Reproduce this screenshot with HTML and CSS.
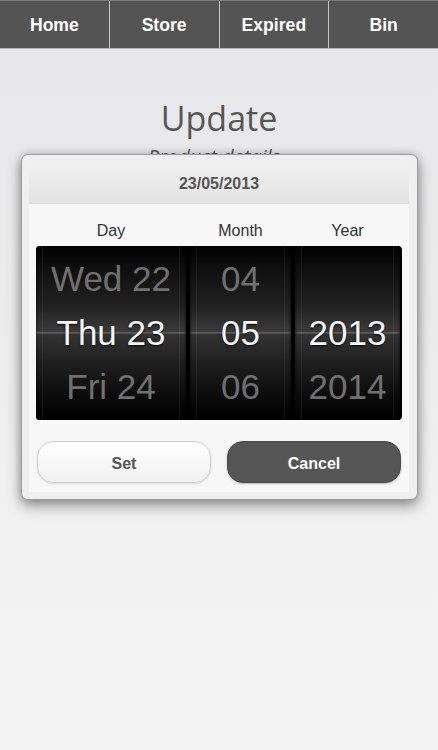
FILE: index.html
```html
<!DOCTYPE html>
<html>
<head>
<meta charset="utf-8">
<link rel="stylesheet" href="styles.css">
</head>
<body>
<nav class="nav">
  <div class="nav-item">Home</div>
  <div class="nav-item">Store</div>
  <div class="nav-item">Expired</div>
  <div class="nav-item last">Bin</div>
</nav>
<main class="main">
  <h1 class="title">Update</h1>
  <p class="subtitle">Product details</p>
</main>
<div class="modal">
  <div class="modal-inner">
    <div class="modal-head">23/05/2013</div>
    <div class="labels">
      <div class="label">Day</div>
      <div class="label">Month</div>
      <div class="label">Year</div>
    </div>
    <div class="picker">
      <div class="col">
        <div class="row">Wed 22</div>
        <div class="row sel">Thu 23</div>
        <div class="row">Fri 24</div>
      </div>
      <div class="col">
        <div class="row">04</div>
        <div class="row sel">05</div>
        <div class="row">06</div>
      </div>
      <div class="col">
        <div class="row"></div>
        <div class="row sel">2013</div>
        <div class="row">2014</div>
      </div>
    </div>
    <div class="buttons">
      <div class="btn btn-set">Set</div>
      <div class="btn btn-cancel">Cancel</div>
    </div>
  </div>
</div>
</body>
</html>
```

FILE: styles.css
```css
html, body {
  margin: 0;
  padding: 0;
}
body {
  width: 438px;
  height: 750px;
  overflow: hidden;
  position: relative;
  font-family: "Liberation Sans", Arial, sans-serif;
  background: linear-gradient(to bottom, #e7e7e9 0px, #ebebec 300px, #f2f2f2 560px, #f3f3f3 750px);
}
.nav {
  display: flex;
  height: 47px;
  background: #545454;
  border-top: 1px solid #7a7a7a;
  border-bottom: 1px solid #b9b9b9;
}
.nav-item {
  flex: 1;
  display: flex;
  align-items: center;
  justify-content: center;
  padding-top: 1px;
  color: #fff;
  font-weight: bold;
  font-size: 17.6px;
  border-right: 1px solid #c4c4c4;
}
.nav-item.last {
  border-right: none;
}
.main {
  text-align: center;
  padding-top: 46px;
}
.title {
  margin: 0;
  font-family: "Open Sans", sans-serif;
  font-weight: 400;
  font-size: 34px;
  line-height: 46px;
  color: #565656;
}
.subtitle {
  margin: 4px 0 0 -10px;
  font-family: "Open Sans", sans-serif;
  font-style: italic;
  font-size: 20px;
  line-height: 24px;
  color: #595959;
}
.modal {
  position: absolute;
  left: 21px;
  top: 154px;
  width: 397px;
  height: 346px;
  box-sizing: border-box;
  border-radius: 7px;
  background: #efefef;
  border: 1px solid #9c9c9c;
  box-shadow: 0 6px 14px rgba(0,0,0,0.38), 0 0 8px rgba(0,0,0,0.18);
  padding: 7px 8px 7px 7px;
}
.modal-inner {
  height: 100%;
  background: #f7f7f7;
  display: flex;
  flex-direction: column;
}
.modal-head {
  height: 42px;
  flex: none;
  background: linear-gradient(to bottom, #f1f1f1, #e3e3e3);
  border-bottom: 1px solid #dedede;
  box-sizing: border-box;
  display: flex;
  align-items: center;
  justify-content: center;
  padding-top: 2px;
  font-weight: bold;
  font-size: 16px;
  color: #555;
}
.labels {
  display: grid;
  grid-template-columns: 150px 101px 105px;
  column-gap: 4px;
  margin: 17px 7px 0 7px;
  height: 20px;
  line-height: 20px;
  font-size: 16px;
  color: #333;
  text-align: center;
}
.picker {
  margin: 5px 7px 0 7px;
  height: 174px;
  background: #000;
  border-radius: 4px;
  display: grid;
  grid-template-columns: 150px 101px 105px;
  column-gap: 4px;
  padding: 0 2px 0 0;
  overflow: hidden;
}
.col {
  display: flex;
  flex-direction: column;
  padding: 6px 0;
  background:
    linear-gradient(to right, rgba(0,0,0,0.35) 0px, transparent 3px, transparent 6px, rgba(255,255,255,0.05) 6px, rgba(255,255,255,0.05) 7px, transparent 7px, transparent calc(100% - 7px), rgba(255,255,255,0.05) calc(100% - 7px), rgba(255,255,255,0.05) calc(100% - 6px), transparent calc(100% - 6px), transparent calc(100% - 3px), rgba(0,0,0,0.35) 100%),
    linear-gradient(to bottom, #000 0%, #0e0e0e 12%, #222 35%, #3b3b3b 49.4%, #5a5a5a 49.6%, #5a5a5a 50.2%, #333 50.5%, #1e1e1e 68%, #090909 88%, #000 100%);
}
.row {
  height: 54px;
  line-height: 54px;
  text-align: center;
  font-size: 35px;
  color: #707070;
}
.row.sel {
  color: #f4f4f4;
  text-shadow: 0 1px 2px rgba(0,0,0,0.9);
}
.buttons {
  display: flex;
  gap: 16px;
  margin: 21px 8px 0 8px;
}
.btn {
  flex: 1;
  height: 42px;
  box-sizing: border-box;
  border-radius: 16px;
  display: flex;
  align-items: center;
  justify-content: center;
  padding-top: 3px;
  font-weight: bold;
  font-size: 16px;
}
.btn-set {
  background: linear-gradient(to bottom, #ffffff, #f0f0f0);
  border: 1px solid #cfcfcf;
  box-shadow: 0 1px 2px rgba(0,0,0,0.12);
  color: #555;
}
.btn-cancel {
  background: #555;
  border: 1px solid #4a4a4a;
  box-shadow: 0 1px 2px rgba(0,0,0,0.25);
  color: #fff;
}
```
